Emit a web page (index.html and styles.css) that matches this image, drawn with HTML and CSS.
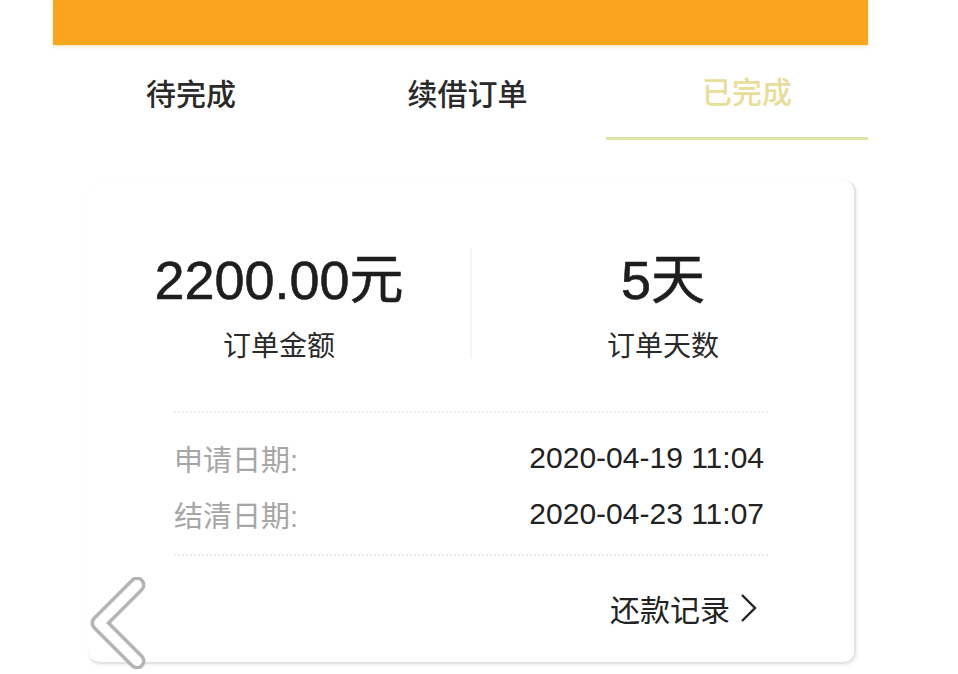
FILE: index.html
```html
<!DOCTYPE html>
<html lang="zh-CN">
<head>
  <meta charset="UTF-8" />
  <meta name="viewport" content="width=device-width, initial-scale=1" />
  <title>已完成订单</title>
  <link rel="stylesheet" href="styles.css">
</head>
<body>

  <div class="screen">
    <div class="topbar"></div>

    <nav class="tabs">
      <div class="tab">待完成</div>
      <div class="tab">续借订单</div>
      <div class="tab active">已完成</div>
    </nav>

    <div class="card">
      <div class="stats">
        <div class="stat">
          <div class="stat-value">2200.00元</div>
          <div class="stat-label">订单金额</div>
        </div>
        <div class="stat">
          <div class="stat-value">5天</div>
          <div class="stat-label">订单天数</div>
        </div>
      </div>

      <div class="dates">
        <div class="row">
          <span class="row-label">申请日期:</span>
          <span class="row-value">2020-04-19 11:04</span>
        </div>
        <div class="row">
          <span class="row-label">结清日期:</span>
          <span class="row-value">2020-04-23 11:07</span>
        </div>
      </div>

      <div class="record">
        <span>还款记录</span>
        <svg class="arrow" width="20" height="32" viewBox="0 0 20 32">
          <polyline points="4,3 17,16 4,29" fill="none" stroke="#222" stroke-width="2.4" stroke-linejoin="miter" />
        </svg>
      </div>
    </div>

    <!-- floating back button -->
    <svg class="back" width="62" height="92" viewBox="0 0 62 92">
      <polyline points="48,8 10,46 48,84" fill="none" stroke="#b4b4b4" stroke-width="17" stroke-linecap="round" stroke-linejoin="round" />
      <polyline points="48,8 10,46 48,84" fill="none" stroke="#ffffff" stroke-width="10" stroke-linecap="round" stroke-linejoin="round" />
    </svg>
  </div>

</body>
</html>
```

FILE: styles.css
```css
body {
  margin: 0;
  padding: 0;
  background: #fff;
  font-family: "Liberation Sans", "Noto Sans CJK SC", sans-serif;
  color: #222;
}

.screen {
  position: relative;
  width: 815px;
  margin-left: 53px;
  height: 674px;
}

.topbar {
  height: 45px;
  background: #f9a61e;
  box-shadow: 0 2px 3px rgba(249, 166, 30, 0.25);
}

.tabs {
  display: flex;
  height: 95px;
}

.tab {
  display: flex;
  align-items: center;
  justify-content: center;
  padding-bottom: 2px;
  font-size: 30px;
  font-weight: 500;
  color: #2a2a2a;
  box-sizing: border-box;
}

.tab:nth-child(1) {
  width: 276px;
}

.tab:nth-child(2) {
  width: 277px;
}

.tab.active {
  width: 262px;
  color: #e9dd9c;
  border-bottom: 3px solid #dbe5a4;
  padding-left: 20px;
}

.card {
  margin: 40px 12px 0 35px;
  height: 484px;
  box-sizing: border-box;
  border-radius: 12px;
  border-right: 2px solid #e4e4e4;
  border-bottom: 2px solid #e4e4e4;
  box-shadow: 1px 1px 3px rgba(0, 0, 0, 0.08);
  padding: 0 86px 0 86px;
}

.stats {
  display: flex;
  margin: 0 -86px;
  padding-top: 68px;
  height: 231px;
  box-sizing: border-box;
}

.stat {
  flex: 1;
  text-align: center;
}

.stat:first-child {
  border-right: 2px solid #f6f6f6;
  height: 110px;
}

.stat-value {
  font-size: 54px;
  line-height: 64px;
  color: #1e1e1e;
  -webkit-text-stroke: 0.6px #1e1e1e;
}

.stat-label {
  margin-top: 17px;
  font-size: 28px;
  line-height: 36px;
  color: #2a2a2a;
}

.dates {
  border-top: 2px dotted #ececec;
  border-bottom: 2px dotted #ececec;
  padding: 17px 0 12px;
}

.row {
  display: flex;
  justify-content: space-between;
  align-items: center;
  height: 56px;
}

.row-label {
  font-size: 29px;
  color: #a6a6a6;
}

.row-value {
  font-size: 30px;
  color: #222;
  margin-right: 4px;
}

.record {
  display: flex;
  justify-content: flex-end;
  align-items: center;
  gap: 8px;
  height: 104px;
  font-size: 30px;
  color: #222;
  margin-right: 10px;
}

.back {
  position: absolute;
  left: 36px;
  top: 577px;
}
```
